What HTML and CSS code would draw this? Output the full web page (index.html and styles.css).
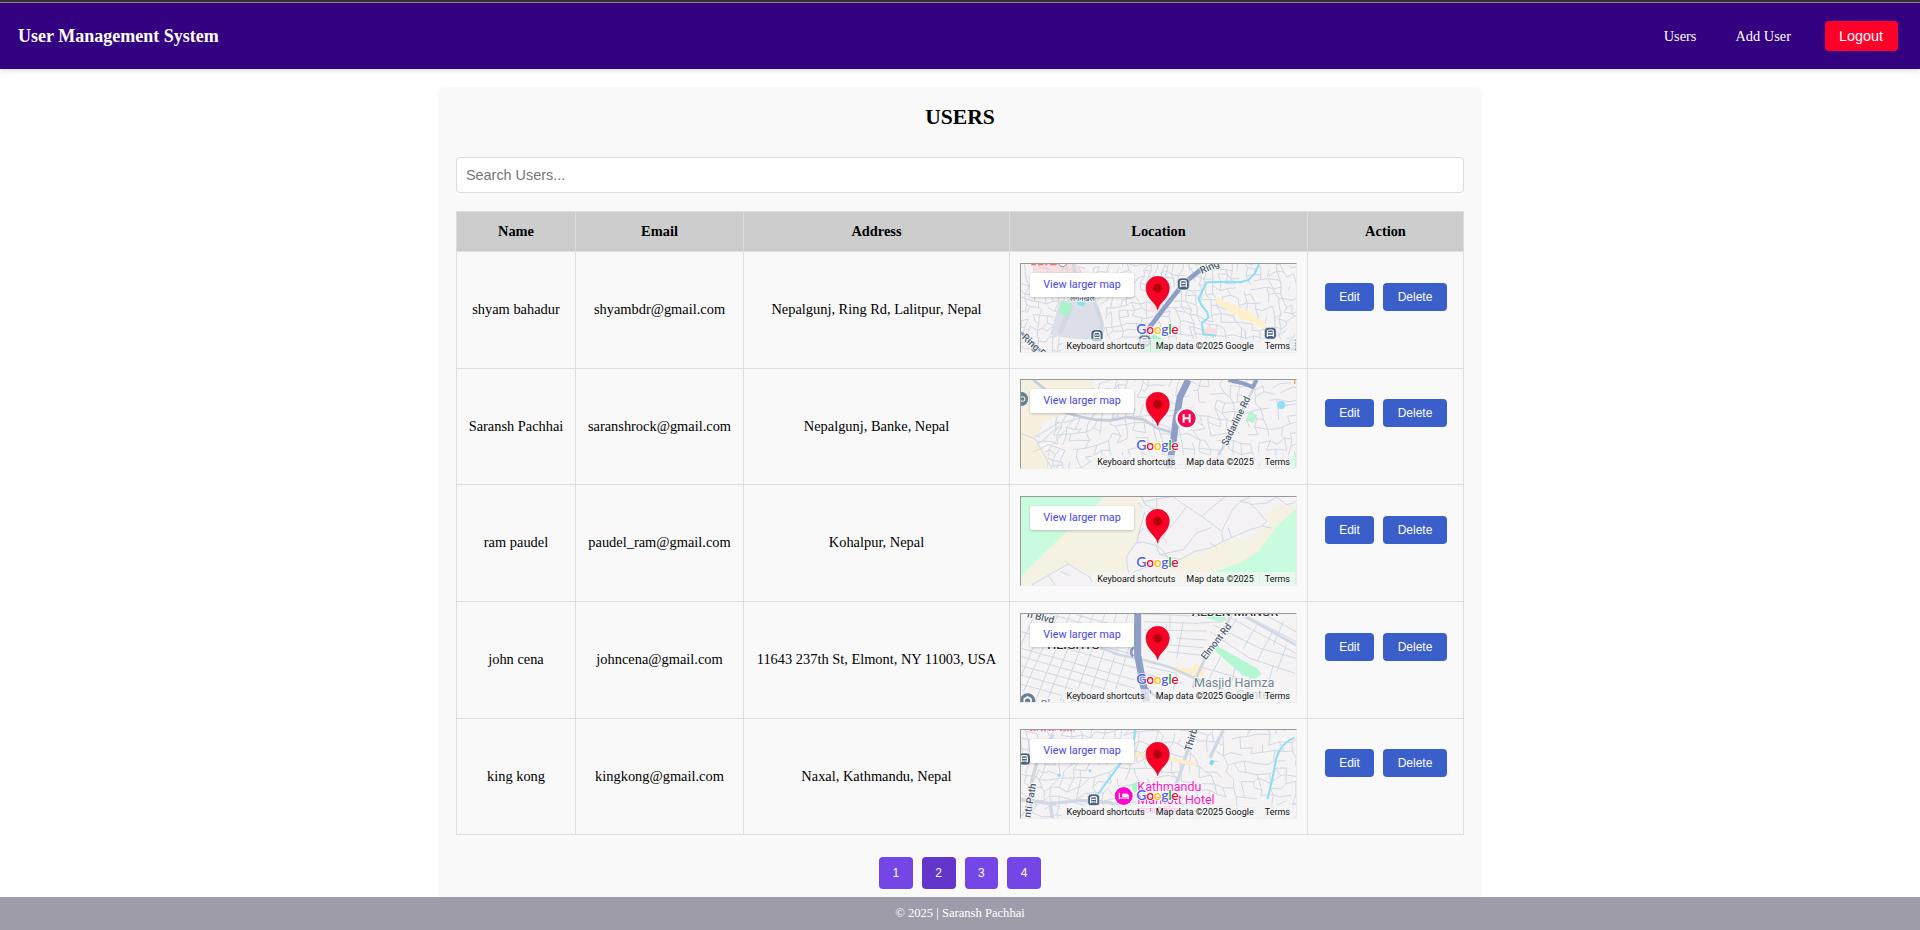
FILE: index.html
```html
<!DOCTYPE html>
<html lang="en">
<head>
<meta charset="utf-8">
<title>User Management System</title>
<link rel="stylesheet" href="styles.css">
</head>
<body>
<svg class="defs" width="0" height="0" aria-hidden="true">
  <defs>
    <g id="pin">
      <path d="M443 165C439 141 408 132 408 99A35 35 0 0 1 478 99C478 132 447 141 443 165Z" fill="#f90027" stroke="#c9001f" stroke-width="1.5"/>
      <circle cx="443" cy="99.500" r="13.500" fill="#b30009"/>
    </g>
    <g id="google">
      <text class="glogo" x="379" y="237" textLength="127"><tspan fill="#4a5cf0">G</tspan><tspan fill="#f4092e">o</tspan><tspan fill="#fbc400">o</tspan><tspan fill="#4a5cf0">g</tspan><tspan fill="#0fa83f">l</tspan><tspan fill="#f4092e">e</tspan></text>
    </g>
    <g id="bus">
      <rect x="-18" y="-18" width="36" height="36" rx="11" fill="#4a6280" stroke="#fff" stroke-width="2"/>
      <path d="M-9 10V-5Q-9-10-4-10H4Q9-10 9-5V10M-9 6H9M-6-2H6" fill="none" stroke="#fff" stroke-width="3.500"/>
    </g>
  </defs>
</svg>

<div class="topline"></div>
<nav class="navbar">
  <div class="brand">User Management System</div>
  <div class="links">
    <a class="link">Users</a>
    <a class="link">Add User</a>
    <button class="logout">Logout</button>
  </div>
</nav>

<main class="container">
  <h2>USERS</h2>
  <input class="search" type="text" placeholder="Search Users...">
  <table class="users">
    <colgroup><col class="c-name"><col class="c-email"><col class="c-address"><col class="c-location"><col class="c-action"></colgroup>
    <thead>
      <tr><th>Name</th><th>Email</th><th>Address</th><th>Location</th><th>Action</th></tr>
    </thead>
    <tbody>
      <tr class="tall">
        <td>shyam bahadur</td><td>shyambdr@gmail.com</td><td>Nepalgunj, Ring Rd, Lalitpur, Nepal</td>
        <td class="loc"><div class="map">
          <svg viewBox="33 27 825 264">
            <rect x="33" y="27" width="825" height="264" fill="#f5f3f4"/>
            <path d="M70 27H200L218 62 205 75H80Z" fill="#fbdedd"/>
            <g class="streets" data-seed="11" data-step="20"></g>
            <path d="M150 135L185 140 240 130 265 150 285 220 275 265 120 240Z" fill="#dcdfe7"/>
            <path d="M180 145L148 235M185 150L155 230M190 27L200 80 250 130 275 200 270 262" class="rd w10"/>
            <path d="M155 138L187 146 176 182 146 174Z" fill="#a9f3c9"/>
            <path d="M200 140L228 142 220 155 204 150Z" fill="#8be4f2"/>
            <path d="M617 126L720 170 770 208 764 222 690 190 620 145Z" fill="#fdf1cd"/>
            <path d="M585 216L627 222 612 240H580Z" fill="#fbdedd"/>
            <path d="M425 135L460 145 438 175 418 165Z" fill="#fde3e4"/>
            <path d="M747 27L735 55 715 75 690 82 660 80 590 82 578 105 566 132 575 152 592 172 595 188 576 204 580 238 618 242" class="river"/>
            <path d="M580 38L520 86 462 160 405 235" class="main"/>
            <path d="M33 232L95 291" class="main w8"/>
            <path d="M430 236L462 255V291H395Z" fill="#a9f3c9"/>
            <circle cx="158" cy="22" r="13" fill="#fff" stroke="#8b8b80" stroke-width="3"/>
            <path d="M64 29H78M84 29H100M106 29H112M120 29H140" stroke="#ee7672" stroke-width="4"/>
            <text class="lbl" transform="translate(575 57) rotate(-24)">Ring</text>
            <text class="lbl" transform="translate(34 249) rotate(43)">Ring R</text>
            <text class="lbl sm" x="180" y="139">लगनखेल</text>
            <use href="#bus" x="520" y="87"/><use href="#bus" x="261" y="242"/><use href="#bus" x="404" y="258" opacity=".75"/><use href="#bus" x="781" y="235"/>
            <use href="#bus" x="851" y="270" opacity=".45"/>
            <use href="#pin"/><use href="#google"/>
          </svg>
          <a class="larger">View larger map</a>
          <div class="attr"><span>Keyboard shortcuts</span><span>Map data ©2025 Google</span><span>Terms</span></div>
        </div></td>
        <td class="act"><div class="btns"><button class="btn">Edit</button><button class="btn del">Delete</button></div></td>
      </tr>
      <tr>
        <td>Saransh Pachhai</td><td>saranshrock@gmail.com</td><td>Nepalgunj, Banke, Nepal</td>
        <td class="loc"><div class="map">
          <svg viewBox="33 24 825 264">
            <rect x="33" y="24" width="825" height="264" fill="#f5f3f4"/>
            <g class="streets" data-seed="27" data-step="24"></g>
            <path d="M33 24H245L250 60 160 125 100 150 75 200 115 250 110 288H33Z" fill="#f5f0df"/>
            <path d="M33 185L75 200 125 288M70 240L115 218 165 235 140 288M75 195L150 150M85 215L150 160M110 240L165 175" class="rd"/>
            <path d="M70 24L105 52 160 120 215 135 255 143 300 145 350 136 400 142 440 168 482 180" class="rd w8 strong"/>
            <path d="M735 40L700 110 650 205 620 260" class="rd w8"/>
            <path d="M535 24L510 75 497 150 490 210 477 288" class="main w16"/>
            <path d="M655 24L700 34 728 45 740 24" class="main w10"/>
            <path d="M718 120L742 130 730 154 707 143Z" fill="#b9f7d3"/>
            <circle cx="814" cy="99" r="12" fill="#8fe1f5"/>
            <circle cx="33" cy="81" r="23" fill="#687f8e" stroke="#fff" stroke-width="3"/><circle cx="38" cy="81" r="7" fill="none" stroke="#fff" stroke-width="3"/>
            <path d="M840 255L858 245V288H835Z" fill="#b9f7d3"/>
            <path d="M854 24V36" stroke="#fd9f45" stroke-width="4"/>
            <text class="lbl" transform="translate(652 223) rotate(-64)" textLength="160" lengthAdjust="spacingAndGlyphs">Sadarline Rd</text>
            <path d="M530 183L506 162A33 33 0 1 1 554 162Z" fill="#fff" stroke="#ddd" stroke-width="1.500"/>
            <circle cx="530" cy="139" r="27" fill="#fa0551"/>
            <path d="M521 126V152M539 126V152M521 139H539" stroke="#fff" stroke-width="6"/>
            <g transform="translate(0 -3)"><use href="#pin"/><use href="#google"/></g>
          </svg>
          <a class="larger">View larger map</a>
          <div class="attr"><span>Keyboard shortcuts</span><span>Map data ©2025</span><span>Terms</span></div>
        </div></td>
        <td class="act"><div class="btns"><button class="btn">Edit</button><button class="btn del">Delete</button></div></td>
      </tr>
      <tr class="tall">
        <td>ram paudel</td><td>paudel_ram@gmail.com</td><td>Kohalpur, Nepal</td>
        <td class="loc"><div class="map">
          <svg viewBox="33 27 825 264">
            <rect x="33" y="27" width="825" height="264" fill="#f5f1e3"/>
            <path d="M33 27H285L190 110 33 265Z" fill="#c9fcdf"/>
            <path d="M390 27H858V55L800 50 765 82 775 105 720 150 640 165 570 195 470 215 400 225 355 240 350 215 375 165 395 110Z" fill="#f4f2f4"/>
            <path d="M65 291L115 262 175 228 240 260 262 291ZM355 240L440 235 430 252 360 291H345Z" fill="#f4f2f4"/>
            <path d="M858 62L800 115 745 190 690 225 600 255V291H858Z" fill="#c9fcdf"/>
            <path d="M395 27L405 50 445 68M400 60L385 45M440 27L440 60M400 42L445 32 480 27M490 27L530 55 575 85 635 130 640 160M530 55L500 95 470 130 440 172M645 27L610 55 575 85M605 118L560 135 520 185 448 200M635 130L665 70 690 40 720 27M640 160L720 125 755 115 770 100 745 70 720 45 690 40M720 50L770 45 800 27M800 27L830 50 858 42M640 160L600 180 555 190 510 215 450 200 438 172 400 163 378 165 350 205 352 240 360 260M380 165L392 115 405 70M440 172L462 190 475 215M665 150L655 120M600 165L620 178M755 115L785 120M355 260L400 240 440 230M370 270L345 291M175 228L115 262 65 291M175 228L165 218M175 228L240 268 250 291M115 262L135 291M150 250L180 262M458 145L470 165M400 120L385 140" class="rd"/>
            <use href="#pin"/><use href="#google"/>
          </svg>
          <a class="larger">View larger map</a>
          <div class="attr"><span>Keyboard shortcuts</span><span>Map data ©2025</span><span>Terms</span></div>
        </div></td>
        <td class="act"><div class="btns"><button class="btn">Edit</button><button class="btn del">Delete</button></div></td>
      </tr>
      <tr class="tall">
        <td>john cena</td><td>johncena@gmail.com</td><td>11643 237th St, Elmont, NY 11003, USA</td>
        <td class="loc"><div class="map">
          <svg viewBox="33 27 825 264">
            <rect x="33" y="27" width="825" height="264" fill="#f5f3f4"/>
            <path d="M33 130L375 225M33 155L375 250M33 182L370 275M33 210L330 291M33 238L230 291M60 100L380 190M130 85L375 150M33 80L70 90M250 27L150 291M285 27L190 291M320 27L230 291M355 27L270 291M372 80L305 291M215 27L110 291M180 27L75 291M145 27L40 260M110 27L33 215M75 27L33 120M200 30L372 75M120 27L372 100" class="rd"/>
            <path d="M400 27L600 35M400 50L560 55 640 50M400 75L590 78M480 27V78M500 100L590 105M480 120L580 128M470 140L570 150M470 60L460 110M520 50L500 160M400 205L520 235M410 185L500 205 490 260M600 80L720 160 855 205M610 60L750 130 858 160M640 27L858 145M700 27L858 110M760 27L858 80M640 140L590 235M680 170L650 291M730 190L700 291M790 180L760 291M830 120L800 200M790 75L740 170M740 60L700 130M570 185L690 220M680 40L650 90M820 50L790 120" class="rd"/>
            <path d="M690 27L760 65 858 120" class="rd w8"/>
            <path d="M583 27H640L650 45 630 50 590 38Z" fill="#b6f6d2"/>
            <path d="M495 185L545 190 560 175 585 195 565 235 540 215 500 200Z" fill="#fbf0cb"/>
            <path d="M607 130L625 125 740 190 755 208 735 221 700 212 640 160Z" fill="#b4f7d3"/>
            <path d="M240 117L330 150 410 167 480 187 545 215 600 240 640 252" class="rd w8"/>
            <path d="M665 27L640 80 585 160 555 225 550 250" class="rd w8"/>
            <path d="M383 27V150L398 230 410 291" class="main w20"/>
            <path d="M372 128A15 15 0 0 0 370 154M398 235Q415 262 455 285" class="main w8"/>
            <text class="lbl" transform="translate(50 36) rotate(14)">n Blvd</text>
            <text class="lbl dark" x="112" y="133" textLength="156" lengthAdjust="spacingAndGlyphs">HEIGHTS</text>
            <text class="lbl dark" x="545" y="33" textLength="260" lengthAdjust="spacingAndGlyphs">ALDEN MANOR</text>
            <text class="lbl" transform="translate(587 166) rotate(-52)" textLength="128" lengthAdjust="spacingAndGlyphs">Elmont Rd</text>
            <text class="lbl place" x="552" y="245" textLength="241" lengthAdjust="spacingAndGlyphs">Masjid Hamza</text>
            <text class="lbl place" x="640" y="281" textLength="150" lengthAdjust="spacingAndGlyphs">ic Center</text>
            <text class="lbl place" x="92" y="311" textLength="330" lengthAdjust="spacingAndGlyphs">Black Sheep American</text>
            <circle cx="53" cy="288" r="23" fill="#687f8e"/><path d="M43 294V282L53 276 63 282V294" fill="none" stroke="#fff" stroke-width="5"/>
            <use href="#pin"/><use href="#google"/>
          </svg>
          <a class="larger">View larger map</a>
          <div class="attr"><span>Keyboard shortcuts</span><span>Map data ©2025 Google</span><span>Terms</span></div>
        </div></td>
        <td class="act"><div class="btns"><button class="btn">Edit</button><button class="btn del">Delete</button></div></td>
      </tr>
      <tr>
        <td>king kong</td><td>kingkong@gmail.com</td><td>Naxal, Kathmandu, Nepal</td>
        <td class="loc"><div class="map">
          <svg viewBox="33 27 825 264">
            <rect x="33" y="27" width="825" height="264" fill="#f5f3f4"/>
            <g class="streets" data-seed="43" data-step="26"></g>
            <path d="M33 235L120 248 210 238 300 245 340 260M130 40L85 110 65 180 60 291M550 27L520 130 495 200M120 248L128 291M640 27L600 110" class="rd w10"/>
            <path d="M372 95L440 98 560 125 555 135 440 112 372 108Z" fill="#fbedc5"/>
            <path d="M365 190L382 182V210L368 215Z" fill="#a9f3c9"/>
            <path d="M375 27L370 70 340 115 300 170 262 222M853 50Q810 68 798 115Q790 170 772 235" class="river"/>
            <path d="M603 116L614 120 606 134 598 128ZM235 145L245 148 240 156Z" fill="#6fdcf3"/>
            <circle cx="147" cy="163" r="5" fill="#8fe1f5"/>
            <path d="M60 28H84M92 29H108M116 28H138M150 29H194" stroke="#f07fc4" stroke-width="4" stroke-dasharray="7 3"/>
            <use href="#bus" x="43" y="114"/><use href="#bus" x="251" y="237"/>
            <text class="lbl" transform="translate(61 291) rotate(-80)">nti Path</text>
            <text class="lbl" transform="translate(543 92) rotate(-74)">Thirb.</text>
            <text class="lbl pink" x="382" y="211" textLength="192" lengthAdjust="spacingAndGlyphs">Kathmandu</text>
            <text class="lbl pink" x="382" y="249" textLength="232" lengthAdjust="spacingAndGlyphs">Marriott Hotel</text>
            <text class="lbl pink sm" x="382" y="275">काठमाडौं मेरियट</text>
            <circle cx="341" cy="224" r="31" fill="#fff"/><circle cx="341" cy="225" r="27" fill="#fd08cb"/>
            <path d="M328 215V235M328 231H355V235M337 223H355V231" fill="none" stroke="#fff" stroke-width="3.500"/><path d="M337 218H353V228H337Z" fill="#fff"/>
            <use href="#pin"/><use href="#google"/>
          </svg>
          <a class="larger">View larger map</a>
          <div class="attr"><span>Keyboard shortcuts</span><span>Map data ©2025 Google</span><span>Terms</span></div>
        </div></td>
        <td class="act"><div class="btns"><button class="btn">Edit</button><button class="btn del">Delete</button></div></td>
      </tr>
    </tbody>
  </table>
  <div class="pages">
    <button class="page">1</button><button class="page active">2</button><button class="page">3</button><button class="page">4</button>
  </div>
</main>
<footer class="footer">© 2025 | Saransh Pachhai</footer>
<script src="streets.js"></script>
</body>
</html>
```
FILE: streets.js
```js
// Fills each .streets group with an irregular network of minor roads.
document.querySelectorAll('.streets').forEach(function (group) {
  var seed = Number(group.dataset.seed);
  var step = Number(group.dataset.step);
  function rnd() {
    seed = (seed * 16807) % 2147483647;
    return seed / 2147483647;
  }
  for (var k = 0; k < 10; k++) rnd();
  var cols = Math.ceil(900 / step), rows = Math.ceil(330 / step), pts = [];
  for (var r = 0; r <= rows; r++) {
    pts.push([]);
    for (var c = 0; c <= cols; c++) {
      var x = 10 + c * step, y = 5 + r * step;
      pts[r].push([
        Math.round(x + Math.sin(y / 70 + x / 160) * 22 + (rnd() - 0.5) * step * 0.75),
        Math.round(y + Math.sin(x / 90) * 20 + (rnd() - 0.5) * step * 0.75)
      ]);
    }
  }
  var d = '';
  for (r = 0; r <= rows; r++) {
    for (c = 0; c <= cols; c++) {
      if (c < cols && rnd() < 0.62) d += 'M' + pts[r][c] + 'L' + pts[r][c + 1];
      if (r < rows && rnd() < 0.62) d += 'M' + pts[r][c] + 'L' + pts[r + 1][c];
    }
  }
  var path = document.createElementNS('http://www.w3.org/2000/svg', 'path');
  path.setAttribute('d', d);
  path.setAttribute('class', 'rd');
  group.appendChild(path);
});
```
FILE: styles.css
```css
* { box-sizing: border-box; }
body {
  margin: 0;
  height: 930px;
  overflow: hidden;
  display: flex;
  flex-direction: column;
  background: #fff;
  color: #000;
  font-family: "Liberation Serif", "Times New Roman", serif;
  font-size: 14.4px;
}
button { border: 0; padding: 0; color: #fff; font-family: "Liberation Sans", Arial, sans-serif; }
.defs { position: absolute; }
.topline { flex: none; height: 3px; background: #333; border-bottom: 1px solid #8a8a8a; }
.navbar {
  flex: none;
  height: 66px;
  padding: 0 22px 0 18px;
  display: flex;
  align-items: center;
  justify-content: space-between;
  background: #320080;
  color: #fff;
  box-shadow: 0 2px 5px rgba(0, 0, 0, .12);
}
.brand { font-size: 18px; font-weight: bold; }
.links { display: flex; align-items: center; }
.link { margin-right: 39px; }
.link + .link { margin-right: 34px; }
.logout { width: 73px; height: 30px; padding-right: 1px; border-radius: 4px; background: #ff0029; font-size: 14.4px; }

.container {
  flex: 1;
  min-height: 0;
  width: 1044px;
  margin: 18px auto 0;
  padding: 18px 18px 0;
  border-radius: 7px 7px 0 0;
  background: #f9f9f9;
}
h2 { margin: 0 0 28px; font-size: 21.6px; line-height: 24px; text-align: center; }
.search {
  display: block;
  width: 100%;
  height: 36px;
  margin-bottom: 18px;
  padding: 0 9px;
  border: 1px solid #ddd;
  border-radius: 4px;
  background: #fff;
  font: 14.4px "Liberation Sans", Arial, sans-serif;
}
.search::placeholder { color: #757575; }

.users {
  width: 1008px;
  table-layout: fixed;
  border-collapse: separate;
  border-spacing: 0;
  border: solid #ddd;
  border-width: 1px 0 0 1px;
}
.c-name { width: 119px; }
.c-email { width: 168px; }
.c-address { width: 266px; }
.c-location { width: 298px; }
.c-action { width: 156px; }
.users th, .users td { padding: 0; border: solid #ddd; border-width: 0 1px 1px 0; text-align: center; vertical-align: middle; }
.users th { height: 40px; background: #cdcdcd; }
.users td { height: 116px; }
.users .tall td { height: 117px; padding-bottom: 2px; }
.users tr td.loc { padding: 0 0 15px 10px; vertical-align: bottom; }
.users tr td.act { padding: 0 0 57px; vertical-align: bottom; }
.btns { display: flex; gap: 9px; padding-left: 17px; }
.btn { width: 49px; height: 28px; border-radius: 4px; background: #3a5fcb; font-size: 12px; }
.del { width: 64px; }

.map {
  position: relative;
  width: 277px;
  height: 90px;
  border: 1px solid;
  border-color: #9a9a9a #eee #eee #9a9a9a;
  overflow: hidden;
  font-family: Roboto, sans-serif;
}
.map svg { display: block; width: 275px; height: 88px; }
.larger {
  position: absolute;
  left: 9px;
  top: 9px;
  width: 104px;
  height: 24px;
  border-radius: 2px;
  background: #fff;
  box-shadow: 0 1px 3px rgba(0, 0, 0, .2);
  color: #4646ea;
  font-size: 10.8px;
  line-height: 23px;
}
.attr {
  position: absolute;
  right: 0;
  bottom: 0;
  display: flex;
  height: 13px;
  padding-right: 1px;
  color: #111;
  font-size: 9px;
  line-height: 14px;
  white-space: nowrap;
}
.attr span { padding: 0 5px; margin-left: 1px; background: rgba(245, 245, 245, .72); }

.rd { fill: none; stroke: #d0d8e4; stroke-width: 3; stroke-linejoin: round; }
.rd.w8 { stroke-width: 8; }
.rd.w10 { stroke-width: 10; }
.rd.strong { stroke: #c3ccd8; }
.river { fill: none; stroke: #8cdff2; stroke-width: 6; stroke-linejoin: round; }
.main { fill: none; stroke: #8d9fc6; stroke-width: 14; stroke-linejoin: round; }
.main.w8 { stroke-width: 8; }
.main.w10 { stroke-width: 12; }
.main.w16 { stroke-width: 20; }
.main.w20 { stroke-width: 21; }
.lbl { font: 500 30px Roboto, "Noto Sans", sans-serif; fill: #4b5a6c; stroke: #fff; stroke-width: 4; paint-order: stroke; }
.lbl.sm { font-size: 22px; }
.lbl.dark { fill: #333; font-size: 27px; }
.lbl.place { fill: #6b8290; font-size: 36px; font-weight: 400; }
.lbl.pink { fill: #fb13c4; font-size: 36px; font-weight: 400; }
.lbl.pink.sm { font-size: 22px; }
.glogo { font: 600 42px Lato, sans-serif; stroke: #fff; stroke-width: 5; paint-order: stroke; }

.pages { display: flex; justify-content: center; gap: 9px; margin-top: 22px; }
.page { width: 33.75px; height: 32px; border-radius: 4px; background: #7446e8; font-size: 12px; }
.active { background: #6236cb; }
.footer {
  flex: none;
  height: 33px;
  background: #9f9caa;
  color: #fff;
  font-size: 12.6px;
  line-height: 32px;
  text-align: center;
}
```
